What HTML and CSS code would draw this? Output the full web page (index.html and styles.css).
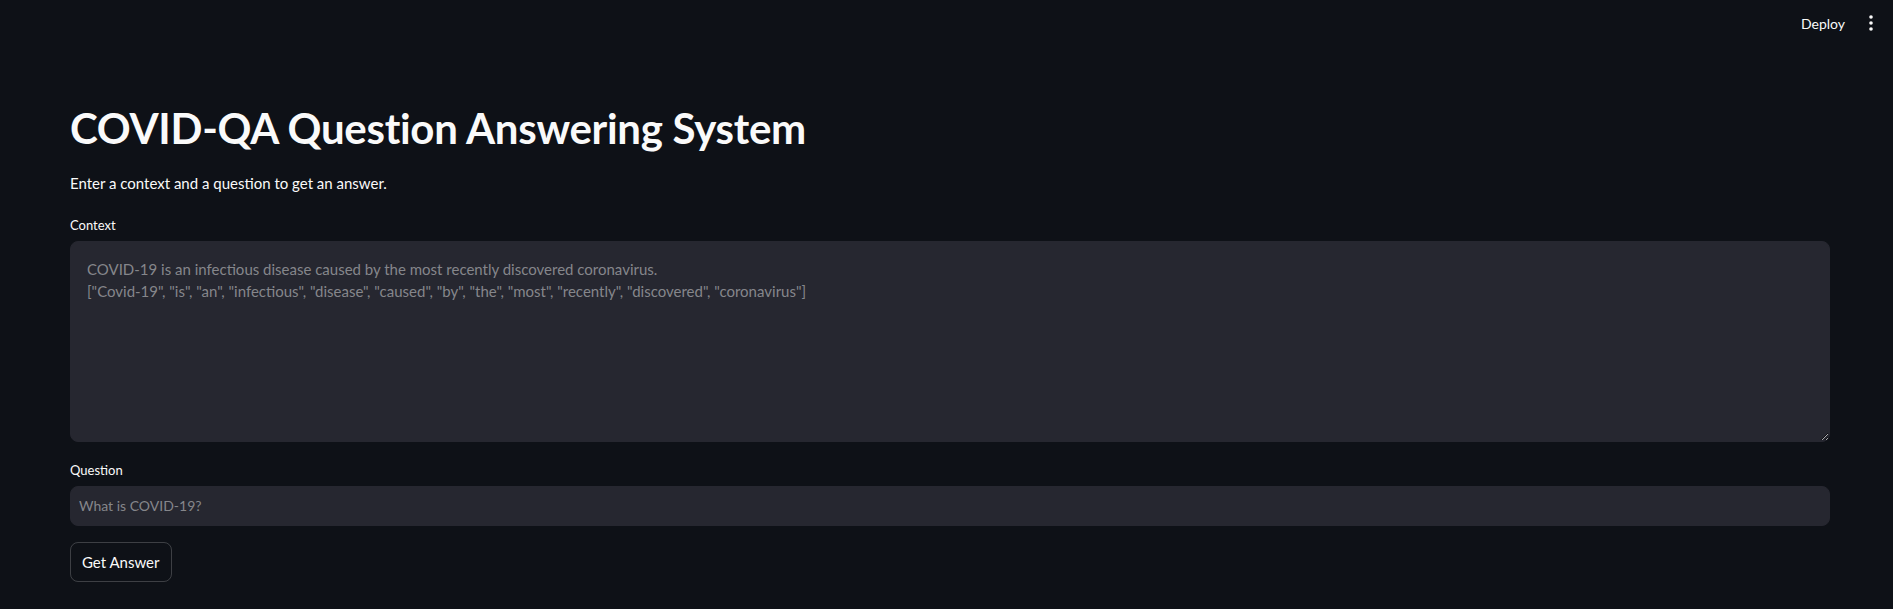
FILE: index.html
```html
<!DOCTYPE html>
<html lang="en">
<head>
<meta charset="utf-8">
<title>COVID-QA Question Answering System</title>
<link rel="stylesheet" href="styles.css">
</head>
<body>
<header class="topbar">
  <button class="deploy" type="button">Deploy</button>
  <button class="menu" type="button" aria-label="Main menu">
    <svg width="4" height="16" viewBox="0 0 4 16"><circle cx="2" cy="2" r="1.8" fill="#fafafa"/><circle cx="2" cy="8" r="1.8" fill="#fafafa"/><circle cx="2" cy="14" r="1.8" fill="#fafafa"/></svg>
  </button>
</header>
<main class="main">
  <h1 class="title">COVID-QA Question Answering System</h1>
  <p class="lead">Enter a context and a question to get an answer.</p>
  <div class="field">
    <label class="label" for="ctx">Context</label>
    <textarea id="ctx" class="area" placeholder="COVID-19 is an infectious disease caused by the most recently discovered coronavirus.&#10;[&quot;Covid-19&quot;, &quot;is&quot;, &quot;an&quot;, &quot;infectious&quot;, &quot;disease&quot;, &quot;caused&quot;, &quot;by&quot;, &quot;the&quot;, &quot;most&quot;, &quot;recently&quot;, &quot;discovered&quot;, &quot;coronavirus&quot;]"></textarea>
  </div>
  <div class="field">
    <label class="label" for="q">Question</label>
    <input id="q" class="input" type="text" placeholder="What is COVID-19?">
  </div>
  <div class="actions">
    <button class="btn" type="button">Get Answer</button>
  </div>
</main>
</body>
</html>
```
FILE: styles.css
```css
html, body {
  margin: 0;
  padding: 0;
  background: #0e1117;
  color: #fafafa;
  font-family: Lato, "Open Sans", sans-serif;
}

.topbar {
  height: 46px;
  display: flex;
  align-items: center;
  justify-content: flex-end;
  padding-right: 16px;
  gap: 14px;
}

.deploy {
  background: transparent;
  border: none;
  color: #fafafa;
  font-family: inherit;
  font-size: 14px;
  padding: 4px 6px;
}

.menu {
  background: transparent;
  border: none;
  padding: 0 4px;
  display: flex;
  align-items: center;
}

.main {
  padding: 57px 63px 40px 70px;
  display: flex;
  flex-direction: column;
}

.title {
  margin: 0;
  font-size: 42px;
  font-weight: 700;
  line-height: 1.2;
  letter-spacing: -0.3px;
}

.lead {
  margin: 18px 0 16px;
  font-size: 15px;
  line-height: 25.6px;
}

.field {
  display: flex;
  flex-direction: column;
  margin-bottom: 16px;
}

.label {
  font-size: 13px;
  line-height: 24px;
  height: 24px;
  margin-bottom: 4px;
}

.area,
.input {
  background: #262730;
  border: 1px solid #262730;
  border-radius: 8px;
  color: #fafafa;
  font-family: inherit;
  box-sizing: border-box;
  outline: none;
}

.area {
  height: 201px;
  padding: 16px 16px;
  font-size: 15px;
  line-height: 22.4px;
  resize: vertical;
}

.input {
  height: 40px;
  padding: 0 8px;
  font-size: 14px;
}

.area::placeholder,
.input::placeholder {
  color: #85868b;
  opacity: 1;
}

.actions {
  display: flex;
}

.btn {
  height: 40px;
  padding: 0 11px;
  background: transparent;
  border: 1px solid rgba(250, 250, 250, 0.2);
  border-radius: 8px;
  color: #fafafa;
  font-family: inherit;
  font-size: 15px;
}
```
